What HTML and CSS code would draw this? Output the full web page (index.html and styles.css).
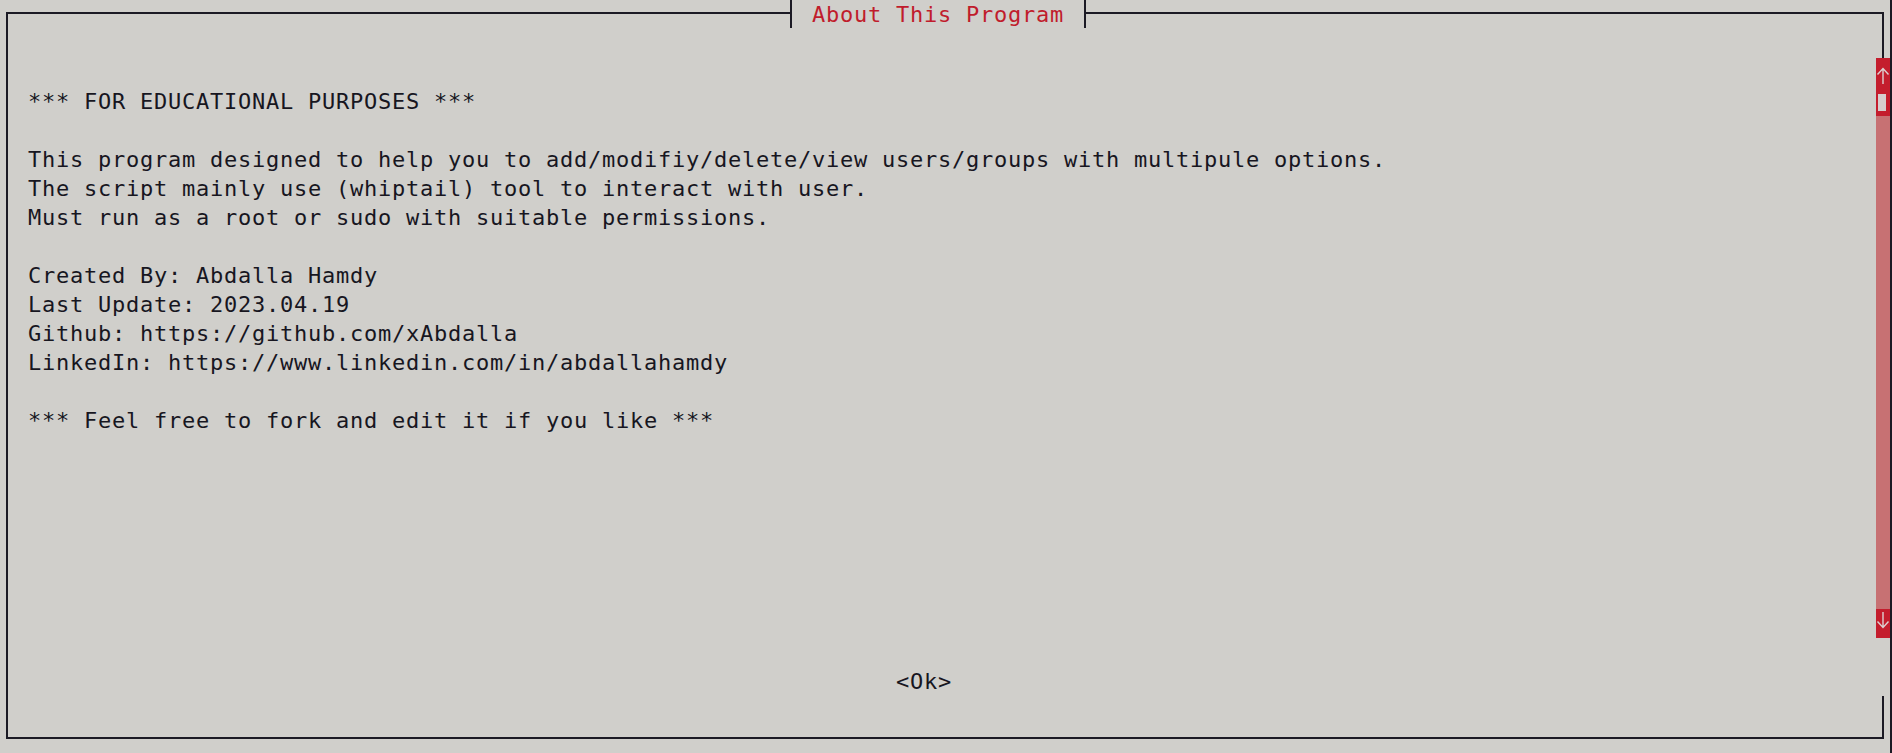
FILE: index.html
```html
<!DOCTYPE html>
<html>
<head>
<meta charset="utf-8">
<title>About This Program</title>
<link rel="stylesheet" href="styles.css">
</head>
<body>
<div class="screen">
  <div class="frame">
    <div class="title">About This Program</div>
    <div class="content">
<pre class="text">*** FOR EDUCATIONAL PURPOSES ***

This program designed to help you to add/modifiy/delete/view users/groups with multipule options.
The script mainly use (whiptail) tool to interact with user.
Must run as a root or sudo with suitable permissions.

Created By: Abdalla Hamdy
Last Update: 2023.04.19
Github: https://github.com/xAbdalla
LinkedIn: https://www.linkedin.com/in/abdallahamdy

*** Feel free to fork and edit it if you like ***</pre>
      <div class="footer"><span class="btn">&lt;Ok&gt;</span></div>
    </div>
    <div class="rail">
      <div class="sb-btn">
        <svg width="14" height="29" viewBox="0 0 14 29"><path d="M7 10.5 V26 M1.5 16.5 L7 10.5 L12.5 16.5" fill="none" stroke="#ddd0d0" stroke-width="1.4"/></svg>
      </div>
      <div class="sb-thumbrow"><div class="thumb"></div></div>
      <div class="trough"></div>
      <div class="sb-btn">
        <svg width="14" height="29" viewBox="0 0 14 29"><path d="M7 3 V18.5 M1.5 12.5 L7 18.5 L12.5 12.5" fill="none" stroke="#ddd0d0" stroke-width="1.4"/></svg>
      </div>
      <div class="gap"></div>
    </div>
  </div>
</div>
<div class="edge"></div>
</body>
</html>
```
FILE: styles.css
```css
html, body {
  margin: 0;
  padding: 0;
}
body {
  width: 1892px;
  height: 753px;
  overflow: hidden;
  background: #d0cfcb;
  display: flex;
  color: #17161f;
  font-family: "DejaVu Sans Mono", "Liberation Mono", monospace;
  font-size: 22px;
  line-height: 29px;
  letter-spacing: calc(14px - 1ch);
}
.screen {
  width: 1890px;
  height: 753px;
}
.edge {
  width: 2px;
  height: 753px;
  background: #1b1a24;
}
.frame {
  position: relative;
  box-sizing: border-box;
  margin: 12px 0 0 6px;
  width: 1878px;
  height: 727px;
  border: 2px solid #1b1a24;
  display: flex;
}
.title {
  position: absolute;
  top: -14px;
  left: 782px;
  height: 28px;
  line-height: 29px;
  padding: 0 20px;
  border-left: 2px solid #1b1a24;
  border-right: 2px solid #1b1a24;
  background: #d0cfcb;
  color: #c01c2c;
  white-space: pre;
}
.content {
  flex: 1;
  display: flex;
  flex-direction: column;
  padding: 73px 0 41px 20px;
}
.text {
  margin: 0;
  font: inherit;
  line-height: 29px;
  white-space: pre;
}
.footer {
  margin-top: auto;
  padding-left: 868px;
  height: 29px;
}
.rail {
  position: absolute;
  top: 44px;
  right: -8px;
  width: 14px;
  display: flex;
  flex-direction: column;
}
.sb-btn {
  height: 29px;
  background: #c41d2d;
}
.sb-btn svg {
  display: block;
}
.sb-thumbrow {
  height: 29px;
  background: #c41d2d;
  display: flex;
  justify-content: flex-start;
  padding: 7px 0 0 2px;
  box-sizing: border-box;
}
.thumb {
  width: 8px;
  height: 17px;
  background: #d6cdcd;
}
.trough {
  height: 493px;
  background: #c77173;
}
.gap {
  height: 58px;
  background: #d0cfcb;
}
```
